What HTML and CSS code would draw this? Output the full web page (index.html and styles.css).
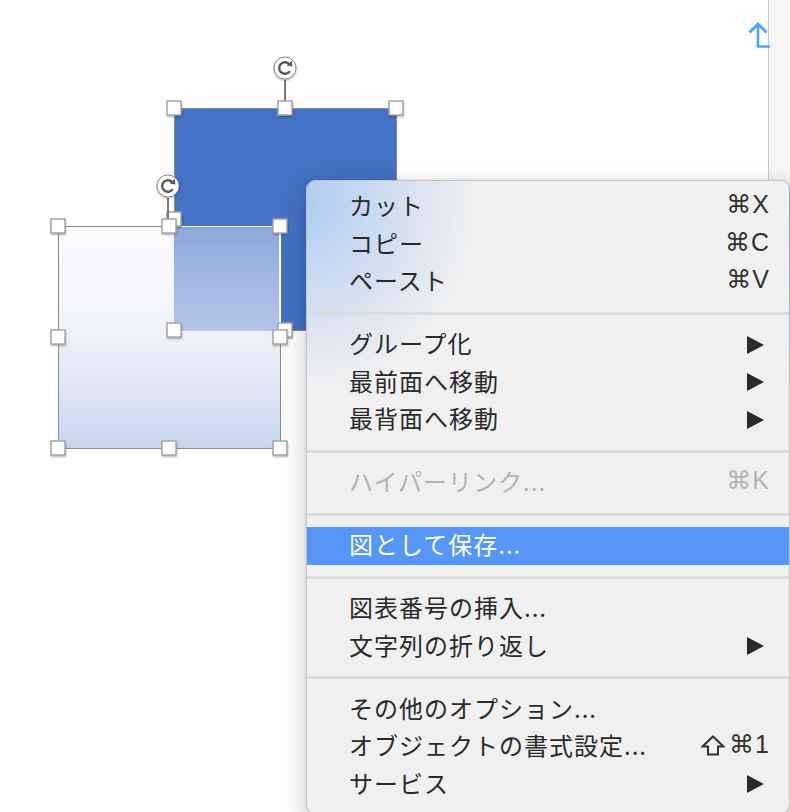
FILE: index.html
```html
<!DOCTYPE html>
<html lang="ja">
<head>
  <meta charset="UTF-8">
  <meta name="viewport" content="width=device-width, initial-scale=1.0">
  <title>図の右クリックメニュー</title>
  <link rel="stylesheet" href="styles.css">
</head>
<body>

  <div class="workspace">

    <!-- Document canvas -->
    <div class="canvas">

      <!-- Back shape (dark blue) -->
      <div class="shape shape-dark"></div>
      <div class="rotate rotate-dark">
        <svg width="24" height="24" viewBox="0 0 24 24">
          <circle cx="12" cy="12" r="11" fill="#fff" stroke="#8a8a8a" stroke-width="1"/>
          <path d="M16.8 15.2 A5.8 5.8 0 1 1 16.8 8.8" fill="none" stroke="#5a5a5a" stroke-width="2.4"/>
          <polygon points="13.6,9.4 19.4,10.6 19,4.8" fill="#5a5a5a"/>
        </svg>
      </div>

      <!-- Front shape (light gradient) -->
      <div class="shape shape-light">
        <div class="overlap"></div>
      </div>

      <!-- Selection handles of back shape -->
      <div class="frame frame-dark">
        <span class="handle h-tl"></span>
        <span class="handle h-tm"></span>
        <span class="handle h-tr"></span>
        <span class="handle h-ml"></span>
        <span class="handle h-mr"></span>
        <span class="handle h-bl"></span>
        <span class="handle h-bm"></span>
        <span class="handle h-br"></span>
      </div>

      <!-- Selection handles of front shape -->
      <div class="rotate rotate-light">
        <svg width="24" height="24" viewBox="0 0 24 24">
          <circle cx="12" cy="12" r="11" fill="#fff" stroke="#8a8a8a" stroke-width="1"/>
          <path d="M16.8 15.2 A5.8 5.8 0 1 1 16.8 8.8" fill="none" stroke="#5a5a5a" stroke-width="2.4"/>
          <polygon points="13.6,9.4 19.4,10.6 19,4.8" fill="#5a5a5a"/>
        </svg>
      </div>
      <div class="frame frame-light">
        <span class="handle h-tl"></span>
        <span class="handle h-tm"></span>
        <span class="handle h-tr"></span>
        <span class="handle h-ml"></span>
        <span class="handle h-mr"></span>
        <span class="handle h-bl"></span>
        <span class="handle h-bm"></span>
        <span class="handle h-br"></span>
      </div>

      <!-- Anchor arrow -->
      <svg class="anchor" width="24" height="30" viewBox="0 0 24 30">
        <path d="M3.5 12.5 L12 4 L20.5 12.5" fill="none" stroke="#4aa3ff" stroke-width="3"/>
        <path d="M12 5 L12 26.5 L24 26.5" fill="none" stroke="#4aa3ff" stroke-width="2.6"/>
      </svg>
    </div>

    <!-- Side panel edge -->
    <div class="side"></div>
  </div>

  <!-- Context menu -->
  <div class="menu">
    <div class="item"><span>カット</span><span class="key">⌘X</span></div>
    <div class="item"><span>コピー</span><span class="key">⌘C</span></div>
    <div class="item"><span>ペースト</span><span class="key">⌘V</span></div>
    <div class="sep"></div>
    <div class="item"><span>グループ化</span><svg class="sub" width="18" height="18" viewBox="0 0 18 18"><polygon points="0,0 17,9 0,18"/></svg></div>
    <div class="item"><span>最前面へ移動</span><svg class="sub" width="18" height="18" viewBox="0 0 18 18"><polygon points="0,0 17,9 0,18"/></svg></div>
    <div class="item"><span>最背面へ移動</span><svg class="sub" width="18" height="18" viewBox="0 0 18 18"><polygon points="0,0 17,9 0,18"/></svg></div>
    <div class="sep"></div>
    <div class="item disabled"><span>ハイパーリンク...</span><span class="key">⌘K</span></div>
    <div class="sep"></div>
    <div class="item active"><span>図として保存...</span></div>
    <div class="sep"></div>
    <div class="item"><span>図表番号の挿入...</span></div>
    <div class="item"><span>文字列の折り返し</span><svg class="sub" width="18" height="18" viewBox="0 0 18 18"><polygon points="0,0 17,9 0,18"/></svg></div>
    <div class="sep"></div>
    <div class="item"><span>その他のオプション...</span></div>
    <div class="item">
      <span>オブジェクトの書式設定...</span>
      <span class="key">
        <svg class="shift" width="24" height="21" viewBox="0 0 24 21"><path d="M12 1.5 L22.5 11.5 L17 11.5 L17 19.5 L7 19.5 L7 11.5 L1.5 11.5 Z" fill="none" stroke="#333" stroke-width="2" stroke-linejoin="miter"/></svg>⌘1
      </span>
    </div>
    <div class="item"><span>サービス</span><svg class="sub" width="18" height="18" viewBox="0 0 18 18"><polygon points="0,0 17,9 0,18"/></svg></div>
  </div>

</body>
</html>
```

FILE: styles.css
```css
/* Basic Reset */
* {
  margin: 0;
  padding: 0;
  box-sizing: border-box;
}

body {
  width: 790px;
  height: 812px;
  overflow: hidden;
  background-color: #fff;
  font-family: "Noto Sans CJK JP", "DejaVu Sans", sans-serif;
  color: #2a2a2a;
}

/* Workspace */
.workspace {
  display: flex;
  height: 812px;
}

.canvas {
  position: relative;
  flex: 1;
  background-color: #fff;
}

.side {
  width: 22px;
  background-color: #f5f5f5;
  border-left: 1px solid #c8c8c8;
}

.anchor {
  position: absolute;
  left: 746px;
  top: 20px;
}

/* Shapes */
.shape {
  position: absolute;
  border: 1px solid #8c8c8c;
}

.shape-dark {
  left: 174px;
  top: 108px;
  width: 223px;
  height: 223px;
  background-color: #4472c4;
}

.shape-light {
  left: 58px;
  top: 226px;
  width: 223px;
  height: 223px;
  background: linear-gradient(to bottom, #fafbfd 0%, #f0f3fa 45%, #dce5f4 75%, #c6d5ee 100%);
}

.overlap {
  position: absolute;
  left: 115px;
  top: -1px;
  width: 107px;
  height: 105px;
  border-top: 1px solid #fff;
  border-right: 2px solid #fff;
  background: linear-gradient(to bottom, #8ea7da, #b4c5e7);
}

/* Selection frames */
.frame {
  position: absolute;
}

.frame-dark {
  left: 174px;
  top: 108px;
  width: 222px;
  height: 222px;
}

.frame-light {
  left: 58px;
  top: 226px;
  width: 222px;
  height: 222px;
}

.handle {
  position: absolute;
  width: 15px;
  height: 15px;
  background-color: #fff;
  border: 1px solid #7a7a7a;
  box-shadow: 0 1px 2px rgba(0, 0, 0, 0.3);
  transform: translate(-50%, -50%);
}

.h-tl { left: 0; top: 0; }
.h-tm { left: 50%; top: 0; }
.h-tr { left: 100%; top: 0; }
.h-ml { left: 0; top: 50%; }
.h-mr { left: 100%; top: 50%; }
.h-bl { left: 0; top: 100%; }
.h-bm { left: 50%; top: 100%; }
.h-br { left: 100%; top: 100%; }

/* Rotation handles */
.rotate {
  position: absolute;
  display: flex;
  flex-direction: column;
  align-items: center;
  width: 24px;
}

.rotate svg {
  filter: drop-shadow(0 1px 1px rgba(0, 0, 0, 0.3));
}

.rotate::after {
  content: "";
  width: 2px;
  background-color: #7a7a7a;
}

.rotate-dark {
  left: 273px;
  top: 56px;
}

.rotate-dark::after {
  height: 26px;
}

.rotate-light {
  left: 156px;
  top: 174px;
}

.rotate-light::after {
  height: 26px;
}

/* Context menu */
.menu {
  position: absolute;
  left: 306px;
  top: 180px;
  width: 484px;
  padding: 7px 0 10px;
  border: 1px solid rgba(0, 0, 0, 0.18);
  border-radius: 9px;
  background:
    radial-gradient(ellipse 170px 190px at 0 20px, rgba(170, 200, 242, 0.9), rgba(170, 200, 242, 0) 100%),
    #f0f0f0;
  box-shadow: 0 8px 26px rgba(0, 0, 0, 0.22), 0 0 3px rgba(0, 0, 0, 0.1);
}

.item {
  display: flex;
  justify-content: space-between;
  align-items: center;
  height: 37.5px;
  padding: 0 19px 4px 42px;
  font-size: 24px;
  letter-spacing: 1px;
  white-space: nowrap;
}

.item .key {
  display: flex;
  align-items: center;
  gap: 4px;
  font-family: "Liberation Sans", "DejaVu Sans", sans-serif;
  font-size: 25px;
  letter-spacing: 1px;
  color: #333;
}

.item .shift {
  margin-top: 2px;
}

.item .sub {
  margin: 4px 5px 0 0;
  fill: #2a2a2a;
}

.item.disabled,
.item.disabled .key {
  color: #b3b3b3;
}

.item.active {
  background-color: #5596f6;
  color: #fff;
}

.sep {
  height: 25.5px;
  display: flex;
  align-items: center;
}

.sep::before {
  content: "";
  width: 100%;
  height: 3px;
  background-color: #dcdcdc;
}
```
